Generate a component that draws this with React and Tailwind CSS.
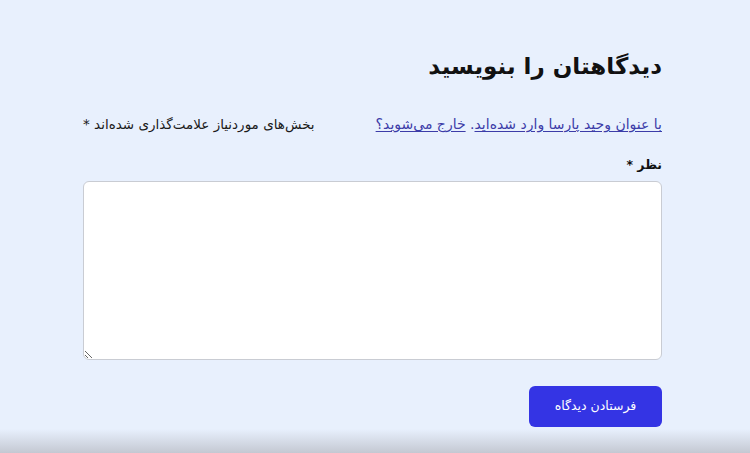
export default function App() {
  return (
    <div
      dir="rtl"
      className="relative w-[750px] h-[453px] overflow-hidden bg-[#e8f0fd] text-[#111]"
      style={{ fontFamily: '"DejaVu Sans", sans-serif' }}
    >
      <div className="w-[579px] mr-[88px] pt-[48px]">
        {/* Heading */}
        <h3 className="text-[23px] font-bold leading-[36px] text-[#111]">دیدگاهتان را بنویسید</h3>

        {/* Logged in / required note */}
        <div className="mt-[30px] flex items-center justify-between leading-[20px]">
          <p className="text-[14px] text-[#3c3ca8]">
            <a href="#" className="underline underline-offset-2">با عنوان وحید پارسا وارد شده‌اید</a>.{" "}
            <a href="#" className="underline underline-offset-2">خارج می‌شوید؟</a>
          </p>
          <p className="text-[13.5px] text-[#1a1a1a]">
            بخش‌های موردنیاز علامت‌گذاری شده‌اند <span>*</span>
          </p>
        </div>

        {/* Comment */}
        <label className="mt-[21px] block text-[12.5px] font-bold leading-[20px]">
          نظر <span>*</span>
        </label>
        <textarea className="mt-[6px] block w-full h-[179px] rounded-[6px] border border-[#c9ccd3] bg-white outline-none resize-y" />

        {/* Submit */}
        <div className="mt-[26px] flex">
          <button className="w-[133px] h-[41px] rounded-[6px] bg-[#3434e4] text-white text-[12.5px]">
            فرستادن دیدگاه
          </button>
        </div>
      </div>

      {/* bottom shade from the capture */}
      <div className="absolute left-0 right-0 bottom-0 h-[24px] bg-gradient-to-b from-transparent to-[#c4c8d2]" />
    </div>
  );
}
